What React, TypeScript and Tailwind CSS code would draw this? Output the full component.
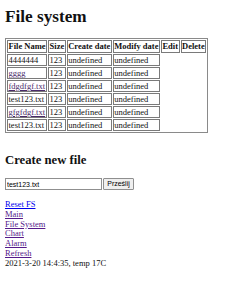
import React from "react";

const rows: { name: string; link: boolean }[] = [
  { name: "4444444", link: false },
  { name: "gggg", link: true },
  { name: "fdgdfgf.txt", link: true },
  { name: "test123.txt", link: false },
  { name: "gfgfdgf.txt", link: true },
  { name: "test123.txt", link: false },
];

const cell = "border border-[#7a7a7a] p-0 text-left align-middle leading-[10px] px-[0.5px] whitespace-nowrap";
const head = "border border-[#7a7a7a] p-0 font-bold text-center leading-[11px] px-[0.5px] whitespace-nowrap";

export default function App() {
  return (
    <div className="bg-white min-h-[281px] px-[5px] text-[#111] font-['Liberation_Serif',serif] text-[8.5px] leading-[normal]">
      <h1 className="text-[17.2px] font-bold mt-0 pt-[7px] mb-[11px] leading-[20px]">File system</h1>
      <table className="border border-[#8a8a8a] border-separate border-spacing-[1px]">
        <thead>
          <tr>
            <th className={head}>File Name</th>
            <th className={head}>Size</th>
            <th className={head}>Create date</th>
            <th className={head}>Modify date</th>
            <th className={head}>Edit</th>
            <th className={head}>Delete</th>
          </tr>
        </thead>
        <tbody>
          {rows.map((r, i) => (
            <tr key={i}>
              <td className={cell}>
                {r.link ? (
                  <a href="#" className="text-[#4a2a6b] underline">
                    {r.name}
                  </a>
                ) : (
                  r.name
                )}
              </td>
              <td className={cell}>123</td>
              <td className={cell}>undefined</td>
              <td className={cell}>undefined</td>
            </tr>
          ))}
        </tbody>
      </table>
      <h2 className="text-[12.7px] font-bold mt-[20px] mb-[10px] leading-[15px]">Create new file</h2>
      <form className="flex items-stretch h-[12px]">
        <input
          type="text"
          defaultValue="test123.txt"
          className="w-[97px] h-[12px] border border-[#8f8f8f] px-[1px] text-[7px] font-['Liberation_Sans',sans-serif] text-black outline-none"
        />
        <button
          type="button"
          className="ml-[1px] w-[31px] h-[12px] border border-[#8f8f8f] bg-[#efefef] text-[7px] font-['Liberation_Sans',sans-serif] text-black leading-[10px] rounded-[1px]"
        >
          Prześlij
        </button>
      </form>
      <div className="mt-[10px] leading-[9.8px]">
        <a href="#" className="text-[#0000EE] underline">Reset FS</a>
        <br />
        <a href="#" className="text-[#551A8B] underline">Main</a>
        <br />
        <a href="#" className="text-[#551A8B] underline">File System</a>
        <br />
        <a href="#" className="text-[#551A8B] underline">Chart</a>
        <br />
        <a href="#" className="text-[#551A8B] underline">Alarm</a>
        <br />
        <a href="#" className="text-[#551A8B] underline">Refresh</a>
        <br />
        <span>2021-3-20 14:4:35, temp 17C</span>
      </div>
    </div>
  );
}
